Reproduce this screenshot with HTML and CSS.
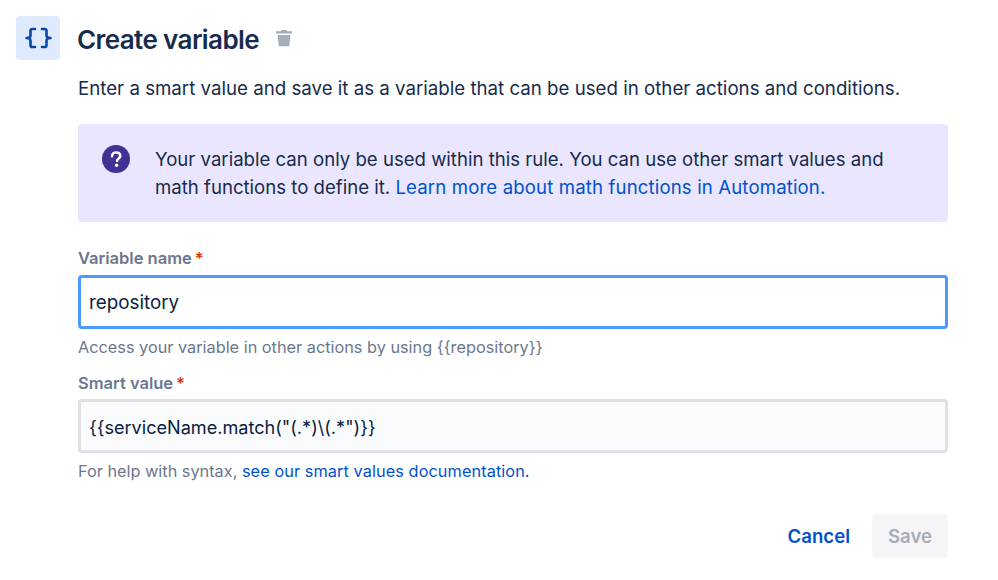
FILE: index.html
```html
<!DOCTYPE html>
<html lang="en">
<head>
<meta charset="utf-8">
<title>Create variable</title>
<link rel="stylesheet" href="styles.css">
</head>
<body>
<div class="page">
  <header class="head">
    <div class="badge">
      <svg width="30" height="26" viewBox="0 0 30 26" fill="none" stroke="#0747a6" stroke-width="2.600" stroke-linecap="round" stroke-linejoin="round"><path d="M12 4H9.500C8.300 4 7.500 4.700 7.500 5.800V10.500C7.500 11.900 6.300 13 3.500 13C6.300 13 7.500 14.100 7.500 15.500V20.200C7.500 21.300 8.300 22 9.500 22H12"/><path d="M19 4H21.500C22.700 4 23.500 4.700 23.500 5.800V10.500C23.500 11.900 24.700 13 27.500 13C24.700 13 23.500 14.100 23.500 15.500V20.200C23.500 21.300 22.700 22 21.500 22H19"/></svg>
    </div>
    <h1 class="title">Create variable</h1>
    <svg class="trash" width="18" height="18" viewBox="0 0 18 18"><path fill="#a5adba" d="M6.500 1h5l.8 1.200H17v2.300H1V2.200h4.700zM2.600 6h12.800l-1 10c-.1.800-.7 1.300-1.400 1.300H5c-.7 0-1.300-.5-1.400-1.300z"/></svg>
  </header>
  <main class="content">
    <p class="lead">Enter a smart value and save it as a variable that can be used in other actions and conditions.</p>
    <section class="note">
      <svg class="note-icon" width="28" height="28" viewBox="0 0 28 28"><circle cx="14" cy="14" r="14" fill="#403294"/><path d="M10 11.200c0-2.300 1.800-3.700 4.100-3.700 2.400 0 4.100 1.400 4.100 3.400 0 1.600-.9 2.400-2 3.100-.9.600-1.100.9-1.100 1.900" fill="none" stroke="#fff" stroke-width="2.600" stroke-linecap="round"/><circle cx="14.600" cy="20.300" r="1.700" fill="#fff"/></svg>
      <p class="note-text">Your variable can only be used within this rule. You can use other smart values and math functions to define it. <a class="link link-note" href="#">Learn more about math functions in Automation.</a></p>
    </section>
    <label class="label label-first">Variable name<span class="req">*</span></label>
    <div class="input input-focus">repository</div>
    <p class="help">Access your variable in other actions by using {{repository}}</p>
    <label class="label label-second">Smart value<span class="req">*</span></label>
    <div class="input input-idle">{{serviceName.match("(.*)\(.*")}}</div>
    <p class="help">For help with syntax, <a class="link link-wide" href="#">see our smart values documentation.</a></p>
    <footer class="actions">
      <a class="cancel" href="#">Cancel</a>
      <span class="save">Save</span>
    </footer>
  </main>
</div>
</body>
</html>
```
FILE: styles.css
```css
* { box-sizing: border-box; }
html, body { margin: 0; padding: 0; background: #fff; }
body { font-family: Inter, "Liberation Sans", sans-serif; color: #172b4d; width: 998px; height: 580px; overflow: hidden; }
.page { padding: 16px 50px 0 16px; }
.head { display: flex; align-items: center; height: 44px; }
.badge { width: 44px; height: 44px; border-radius: 4px; background: #deebff; display: flex; align-items: center; justify-content: center; }
.title { margin: 3px 0 0 17px; font-size: 26px; font-weight: 600; line-height: 40px; letter-spacing: -0.6px; }
.trash { margin-left: 16px; }
.content { padding-left: 62px; }
.lead { margin: 15px 0 0; font-size: 18.700px; line-height: 28px; }
.note { margin-top: 21px; height: 98px; background: #eae6ff; border-radius: 4px; display: flex; padding: 21px 24px; }
.note-icon { flex: none; }
.note-text { margin: 0 0 0 25px; font-size: 18.600px; line-height: 28px; }
.link { color: #0052cc; text-decoration: none; }
.link-wide { letter-spacing: 0.08px; }
.link-note { letter-spacing: 0.14px; }
.label { display: block; font-size: 16.500px; font-weight: 600; line-height: 20px; color: #6b778c; }
.label-first { margin-top: 26px; }
.label-second { margin-top: 14px; }
.req { color: #de350b; margin-left: 3px; }
.input { height: 54px; margin-top: 7px; border-radius: 4px; font-size: 18.800px; padding: 1px 8px 0; display: flex; align-items: center; color: #091e42; border: 3px solid #dfe1e6; }
.input-focus { background: #fff; border-color: #4c9aff; }
.input-idle { margin-top: 6px; background: #fafbfc; font-size: 18.100px; }
.help { margin: 6px 0 0; font-size: 16.300px; line-height: 24px; color: #6b778c; }
.actions { margin-top: 31px; display: flex; justify-content: flex-end; align-items: center; }
.cancel { color: #0052cc; font-size: 18.600px; font-weight: 600; text-decoration: none; margin-right: 22px; }
.save { width: 76px; height: 44px; border-radius: 4px; background: #f4f5f7; color: #a5adba; font-size: 18.600px; font-weight: 600; display: flex; align-items: center; justify-content: center; }
```
